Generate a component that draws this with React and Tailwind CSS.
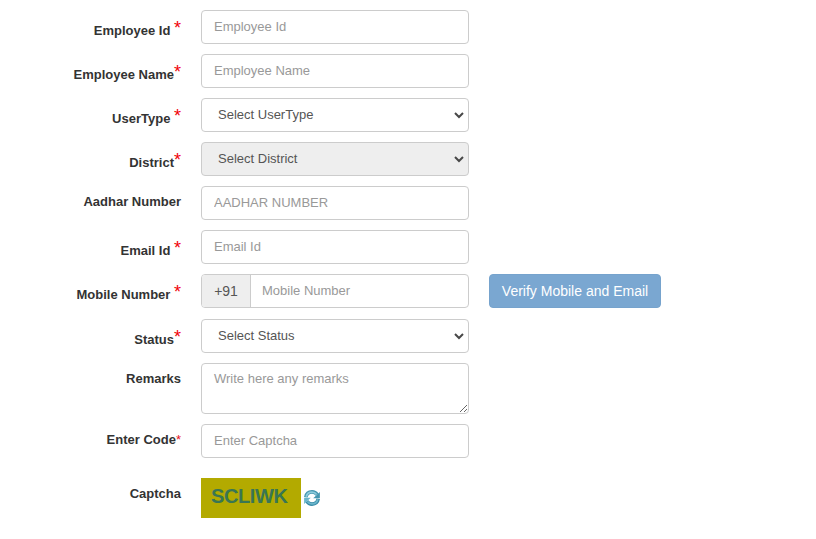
import React from "react";

const control =
  "block w-[268px] h-[34px] rounded-[4px] border border-[#ccc] bg-white px-3 pt-[5px] pb-[7px] text-[13px] leading-5 text-[#555] placeholder:text-[#999] placeholder:opacity-100 outline-none";
const selectControl =
  "block w-[268px] h-[34px] appearance-none rounded-[4px] border border-[#ccc] bg-white px-4 py-[6px] text-[13px] leading-5 text-[#555] disabled:bg-[#eee] disabled:opacity-100 outline-none";

function Row({ label, star, gap = "mb-[10px]", children }) {
  return (
    <div className={`flex items-start ${gap}`}>
      <label className="flex w-[181px] shrink-0 justify-end pt-[6px] text-[13px] leading-5 font-bold whitespace-pre text-[#333]">
        <span className={star === "large" ? "pt-[5px]" : ""}>{label}</span>
        {star === "large" && (
          <span className="-mt-px h-5 pt-[3px] text-[18px] leading-5 font-normal text-[#f00008]">*</span>
        )}
        {star === "small" && <span className="font-normal text-[#e8141c]">*</span>}
      </label>
      <div className="ml-5 flex">{children}</div>
    </div>
  );
}

function Select({ text, disabled }) {
  return (
    <div className="relative">
      <select className={selectControl} disabled={disabled}>
        <option>{text}</option>
      </select>
      <svg
        className="pointer-events-none absolute top-[13px] right-[5px]"
        width="10"
        height="8"
        viewBox="0 0 10 8"
        fill="none"
        stroke="#484848"
        strokeWidth="2"
        aria-hidden="true"
      >
        <path d="M1 2L5 6L9 2" />
      </svg>
    </div>
  );
}

function RefreshIcon() {
  return (
    <svg width="18" height="18" viewBox="0 0 18 18" aria-hidden="true">
      <path d="M2.800 8.200C3.400 4.700 5.900 2.900 9 2.900c2.300 0 4 1 5.100 2.800" fill="none" stroke="#4596b0" strokeWidth="3.600" />
      <path d="M3.200 7.800C3.900 4.900 6.200 3.200 9 3.200c2 0 3.600.9 4.600 2.400" fill="none" stroke="#8ccbdc" strokeWidth="1.800" />
      <path d="M16.900 3.100V9.200H10.200Z" fill="#4596b0" />
      <path d="M15.200 9.800C14.600 13.300 12.100 15.100 9 15.100c-2.300 0-4-1-5.100-2.800" fill="none" stroke="#3689a6" strokeWidth="3.600" />
      <path d="M14.800 10.200C14.100 13.100 11.800 14.800 9 14.800c-2 0-3.600-.9-4.600-2.400" fill="none" stroke="#69b5cb" strokeWidth="1.800" />
      <path d="M1.100 14.900V8.800H7.800Z" fill="#69b5cb" />
    </svg>
  );
}

export default function App() {
  return (
    <main className="h-[539px] w-[816px] overflow-hidden bg-white pt-[10px] font-['Liberation_Sans',Arial,sans-serif]">
      <Row label="Employee Id " star="large">
        <input className={control} placeholder="Employee Id" />
      </Row>
      <Row label="Employee Name" star="large">
        <input className={control} placeholder="Employee Name" />
      </Row>
      <Row label="UserType " star="large">
        <Select text="Select UserType" />
      </Row>
      <Row label="District" star="large">
        <Select text="Select District" disabled />
      </Row>
      <Row label="Aadhar Number">
        <input className={control} placeholder="AADHAR NUMBER" />
      </Row>
      <Row label="Email Id " star="large">
        <input className={control} placeholder="Email Id" />
      </Row>
      <Row label="Mobile Number " star="large" gap="mb-[11px]">
        <div className="flex h-[34px] w-[268px] overflow-hidden rounded-[4px] border border-[#ccc]">
          <span className="flex w-[49px] items-center justify-center border-r border-[#ccc] bg-[#eee] text-[14px] text-[#555]">
            +91
          </span>
          <input
            className="min-w-0 flex-1 pr-3 pb-[6px] pl-[11px] pt-[6px] text-[13px] leading-5 text-[#555] outline-none placeholder:text-[#999] placeholder:opacity-100"
            placeholder="Mobile Number"
          />
        </div>
        <button className="ml-5 h-[34px] w-[172px] rounded-[4px] border border-[#76a3cd] bg-[#7aa7d1] text-[14px] leading-5 text-white">
          Verify Mobile and Email
        </button>
      </Row>
      <Row label="Status" star="large">
        <Select text="Select Status" />
      </Row>
      <Row label="Remarks">
        <textarea
          className="block h-[51px] w-[268px] resize rounded-[4px] border border-[#ccc] px-3 pt-[5px] text-[13px] leading-5 text-[#555] outline-none placeholder:text-[#999] placeholder:opacity-100"
          placeholder="Write here any remarks"
        />
      </Row>
      <Row label="Enter Code" star="small" gap="mb-5">
        <input className={control} placeholder="Enter Captcha" />
      </Row>
      <Row label="Captcha">
        <div className="flex h-10 w-[100px] items-start bg-[#b3aa00] pt-[7px] pl-[10px] text-[20px] leading-[23px] font-bold tracking-[-0.4px] text-[#397653]">
          SCLIWK
        </div>
        <button className="mt-[11px] ml-[2px] h-[18px] w-[18px]" aria-label="Refresh captcha">
          <RefreshIcon />
        </button>
      </Row>
    </main>
  );
}
